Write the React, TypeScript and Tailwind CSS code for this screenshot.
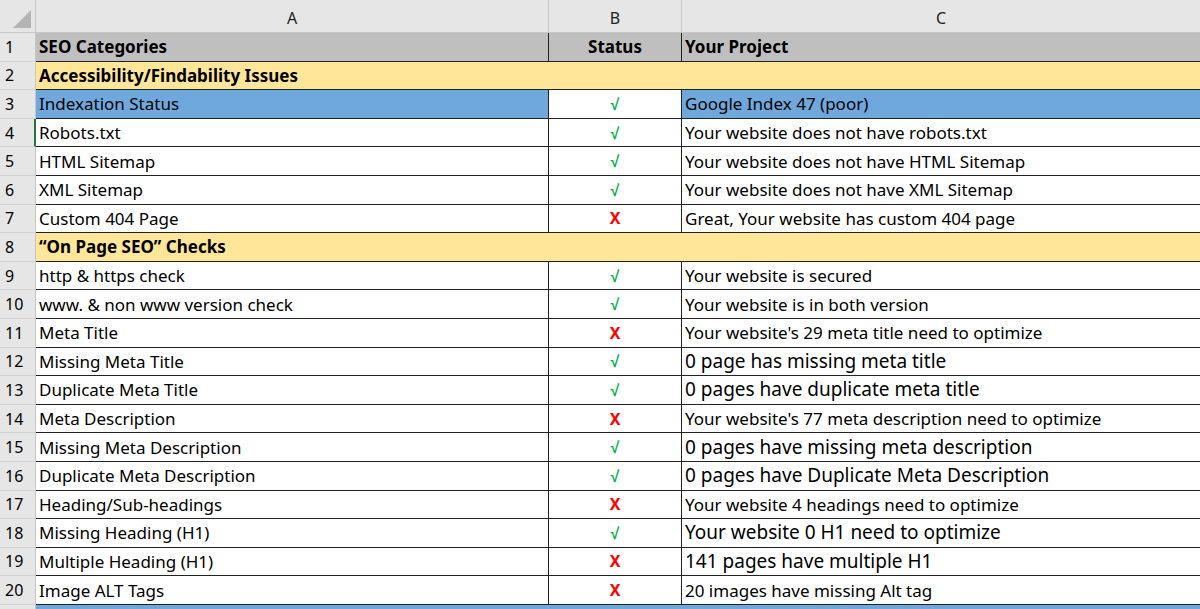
import React from 'react';

type Row = {
  a: string;
  b?: 'ok' | 'bad';
  c?: string;
  arial?: boolean;
  kind?: 'head' | 'section' | 'selected';
};

const rows: Row[] = [
  { a: 'SEO Categories', kind: 'head' },
  { a: 'Accessibility/Findability Issues', kind: 'section' },
  { a: 'Indexation Status', b: 'ok', c: 'Google Index 47 (poor)', kind: 'selected' },
  { a: 'Robots.txt', b: 'ok', c: 'Your website does not have robots.txt' },
  { a: 'HTML Sitemap', b: 'ok', c: 'Your website does not have HTML Sitemap' },
  { a: 'XML Sitemap', b: 'ok', c: 'Your website does not have XML Sitemap' },
  { a: 'Custom 404 Page', b: 'bad', c: 'Great, Your website has custom 404 page' },
  { a: '\u201cOn Page SEO\u201d Checks', kind: 'section' },
  { a: 'http & https check', b: 'ok', c: 'Your website is secured' },
  { a: 'www. & non www version check', b: 'ok', c: 'Your website is in both version' },
  { a: 'Meta Title', b: 'bad', c: "Your website's 29 meta title need to optimize" },
  { a: 'Missing Meta Title', b: 'ok', c: '0 page has missing meta title', arial: true },
  { a: 'Duplicate Meta Title', b: 'ok', c: '0 pages have duplicate meta title', arial: true },
  { a: 'Meta Description', b: 'bad', c: "Your website's 77 meta description need to optimize" },
  { a: 'Missing Meta Description', b: 'ok', c: '0 pages have missing meta description', arial: true },
  { a: 'Duplicate Meta Description', b: 'ok', c: '0 pages have Duplicate Meta Description', arial: true },
  { a: 'Heading/Sub-headings', b: 'bad', c: 'Your website 4 headings need to optimize' },
  { a: 'Missing Heading (H1)', b: 'ok', c: 'Your website 0 H1 need to optimize', arial: true },
  { a: 'Multiple Heading (H1)', b: 'bad', c: '141 pages have multiple H1', arial: true },
  { a: 'Image ALT Tags', b: 'bad', c: '20 images have missing Alt tag' },
];

const cols = 'grid grid-cols-[36px_513px_133px_518px]';

export default function App() {
  return (
    <div className="w-[1200px] h-[609px] overflow-hidden bg-white text-[17px] text-black font-['Open_Sans','Liberation_Sans',sans-serif]">
      <div className={`${cols} h-[33px] bg-[#e6e6e6] text-[#222] text-[16px] font-['Liberation_Sans',sans-serif] border-b border-[#c6c6c6]`}>
        <div className="relative border-r border-[#c6c6c6]">
          <div className="absolute right-[4px] bottom-[4px] w-0 h-0 border-l-[18px] border-l-transparent border-b-[18px] border-b-[#b4b4b4]" />
        </div>
        <div className="flex items-end justify-center pb-[2px] border-r border-[#c6c6c6]">A</div>
        <div className="flex items-end justify-center pb-[2px] border-r border-[#c6c6c6]">B</div>
        <div className="flex items-end justify-center pb-[2px]">C</div>
      </div>
      {rows.map((r, i) => {
        const bg =
          r.kind === 'head' ? 'bg-[#bfbfbf]' : r.kind === 'section' ? 'bg-[#ffe699]' : r.kind === 'selected' ? 'bg-[#6fa8dc]' : 'bg-white';
        return (
          <div key={i} className={`${cols} h-[28.6px] leading-none`}>
            <div className={`flex items-center pl-[5px] bg-[#e6e6e6] text-[16px] font-['Liberation_Sans',sans-serif] border-b border-[#d0d0d0] ${i === 3 ? 'border-r-2 border-r-[#217346]' : 'border-r border-r-[#c6c6c6]'}`}>
              {i + 1}
            </div>
            {r.kind === 'section' ? (
              <div className={`col-span-3 flex items-center pl-[3px] font-bold ${bg} border-b border-[#222]`}>{r.a}</div>
            ) : (
              <>
                <div className={`flex items-center pl-[3px] ${bg} border-b border-r border-[#222] ${r.kind === 'head' ? 'font-bold' : ''}`}>{r.a}</div>
                <div className={`flex items-center justify-center border-b border-r border-[#222] ${r.kind === 'head' ? 'bg-[#bfbfbf] font-bold' : 'bg-white'}`}>
                  {r.kind === 'head' ? 'Status' : r.b === 'ok' ? (
                    <span className="text-[#00b050] font-bold text-[16px]">{'\u221a'}</span>
                  ) : (
                    <span className="text-[#ff0000] font-bold text-[16px] font-['Liberation_Sans',sans-serif]">X</span>
                  )}
                </div>
                <div className={`flex items-center pl-[3px] whitespace-nowrap ${bg} border-b border-[#222] ${r.kind === 'head' ? 'font-bold' : ''} ${r.arial ? "font-['Liberation_Sans',sans-serif] text-[19px]" : ''}`}>
                  {r.kind === 'head' ? 'Your Project' : r.c}
                </div>
              </>
            )}
          </div>
        );
      })}
      <div className={`${cols} h-[10px]`}>
        <div className="bg-[#e6e6e6] border-r border-[#c6c6c6]" />
        <div className="col-span-3 bg-[#6fa8dc]" />
      </div>
    </div>
  );
}
